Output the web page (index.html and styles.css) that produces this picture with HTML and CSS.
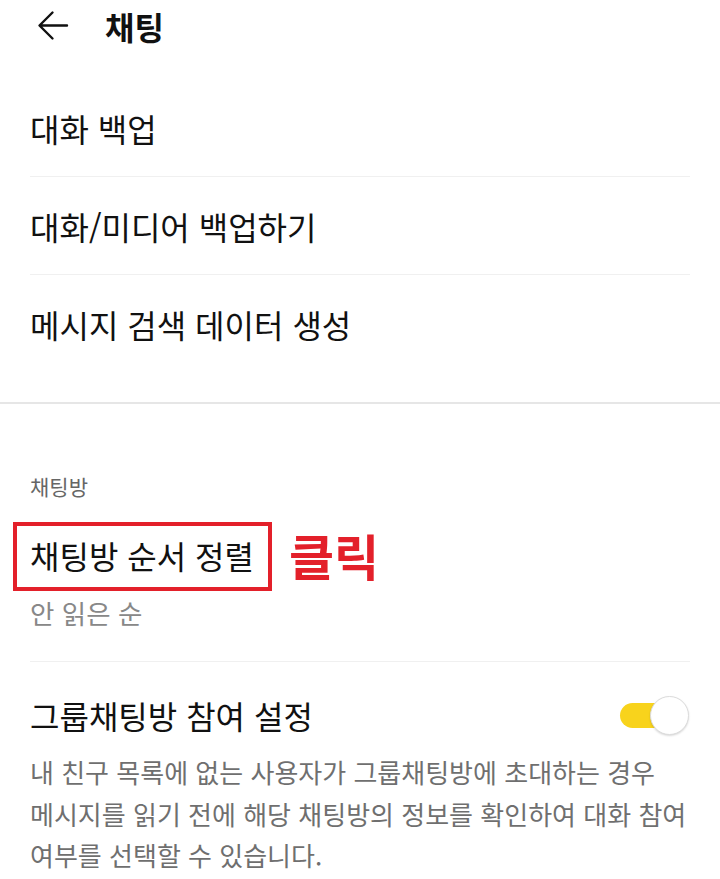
FILE: index.html
```html
<!DOCTYPE html>
<html lang="ko">
<head>
  <meta charset="UTF-8">
  <meta name="viewport" content="width=device-width, initial-scale=1.0">
  <title>채팅</title>
  <link rel="stylesheet" href="styles.css">
</head>
<body>
  <header class="top-bar">
    <svg class="back-icon" width="32" height="32" viewBox="0 0 32 32" aria-hidden="true">
      <path d="M30 15.5H3M15.5 2.5L2.5 15.5L15.5 28.5" fill="none" stroke="#111" stroke-width="2.4" stroke-linecap="round" stroke-linejoin="round"/>
    </svg>
    <h1 class="page-title">채팅</h1>
  </header>

  <!-- backup section -->
  <section class="group">
    <div class="row">대화 백업</div>
    <div class="row">대화/미디어 백업하기</div>
    <div class="row">메시지 검색 데이터 생성</div>
  </section>

  <!-- chat room section -->
  <section class="group group-rooms">
    <div class="group-label">채팅방</div>

    <div class="item">
      <div class="item-head">
        <span class="item-title marked">채팅방 순서 정렬</span>
        <span class="click-note">클릭</span>
      </div>
      <div class="item-sub">안 읽은 순</div>
    </div>

    <div class="item item-last">
      <div class="item-head item-switch">
        <span class="item-title">그룹채팅방 참여 설정</span>
        <span class="toggle on"><span class="knob"></span></span>
      </div>
      <p class="item-desc">내 친구 목록에 없는 사용자가 그룹채팅방에 초대하는 경우 메시지를 읽기 전에 해당 채팅방의 정보를 확인하여 대화 참여 여부를 선택할 수 있습니다.</p>
    </div>
  </section>
</body>
</html>
```

FILE: styles.css
```css
body {
  margin: 0;
  background: #fff;
  color: #111;
  font-family: "Noto Sans CJK KR", "Noto Sans", sans-serif;
  overflow: hidden;
}

.top-bar {
  display: flex;
  align-items: center;
  height: 52px;
  padding-left: 37px;
}

.back-icon {
  display: block;
}

.page-title {
  margin: 0 0 0 36px;
  font-size: 32px;
  font-weight: 700;
  line-height: 52px;
}

/* plain rows */
.group {
  padding: 27px 30px 30px;
  border-bottom: 2px solid #e6e6e6;
}

.row {
  display: flex;
  align-items: center;
  height: 97px;
  font-size: 32px;
  border-bottom: 1px solid #f0f0f0;
}

.row:last-child {
  border-bottom: none;
}

/* chat room section */
.group-rooms {
  padding-top: 68px;
  padding-bottom: 0;
  border-bottom: none;
}

.group-label {
  font-size: 21px;
  line-height: 28px;
  color: #666;
}

.item {
  padding: 35px 0 30px;
  border-bottom: 1px solid #f0f0f0;
}

.item-last {
  border-bottom: none;
  padding-top: 33px;
}

.item-head {
  display: flex;
  align-items: center;
  height: 40px;
}

.item-title {
  font-size: 32px;
  line-height: 40px;
}

.marked {
  position: relative;
}

/* red annotation frame drawn over the title */
.marked::after {
  content: "";
  position: absolute;
  top: -13px;
  right: -18px;
  bottom: -16px;
  left: -17px;
  border: 4px solid #e3202a;
}

.click-note {
  margin-left: 35px;
  font-size: 49px;
  font-weight: 700;
  color: #e3202a;
  line-height: 40px;
}

.item-sub {
  margin-top: 20px;
  font-size: 26.5px;
  line-height: 36px;
  color: #888;
}

.item-switch {
  justify-content: space-between;
}

.toggle {
  position: relative;
  width: 54px;
  height: 25px;
  margin-right: 16px;
  border-radius: 13px;
  background: #f8d31c;
}

.toggle .knob {
  position: absolute;
  top: -7px;
  right: -15px;
  width: 37px;
  height: 37px;
  border-radius: 50%;
  background: #fff;
  border: 1px solid #dcdcdc;
  box-shadow: 0 1px 2px rgba(0, 0, 0, 0.15);
}

.item-desc {
  margin: 16px -10px 0 0;
  font-size: 26px;
  line-height: 41.5px;
  color: #6f6f6f;
  word-break: keep-all;
}
```
